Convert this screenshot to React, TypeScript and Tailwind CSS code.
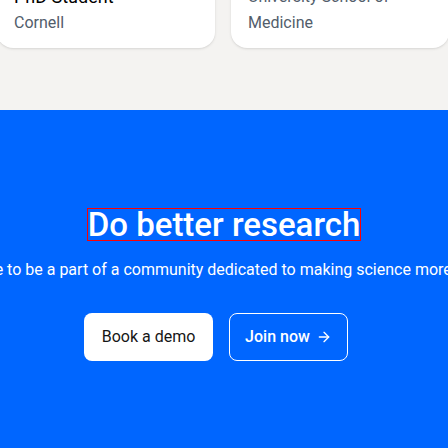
import React from 'react';
import { ArrowRight } from 'lucide-react';

interface Testimonial {
  role: string;
  place: string[];
}

const testimonials: Testimonial[] = [
  { role: 'PhD Student', place: ['Cornell'] },
  { role: 'Postdoctoral Fellow', place: ['University School of', 'Medicine'] },
];

const font = { fontFamily: 'Roboto, "Noto Sans", sans-serif' };

const TestimonialCard: React.FC<{ item: Testimonial }> = ({ item }) => (
  <div className="w-[218px] shrink-0 rounded-2xl bg-white px-[17px] pt-4 pb-3 shadow-sm">
    <p className="text-lg leading-[26px] text-black">{item.role}</p>
    {item.place.map((line) => (
      <p key={line} className="text-base leading-[26px] text-[#525d6b]">
        {line}
      </p>
    ))}
  </div>
);

const App: React.FC = () => {
  return (
    <div className="h-[448px] overflow-hidden bg-[#0066ff]" style={font}>
      {/* testimonials strip, scrolled so only the bottom of the cards shows */}
      <div className="flex h-[110px] items-start overflow-hidden bg-[#f4f3f1]">
        <div className="-ml-[3px] flex h-[48px] items-end gap-4">
          {testimonials.map((t) => (
            <TestimonialCard key={t.role} item={t} />
          ))}
        </div>
      </div>

      {/* call to action */}
      <div className="flex flex-col items-center pt-[98px] text-white">
        <h2 className="border border-[#ff0000] text-[33px] leading-[31px] font-medium">
          Do better research
        </h2>
        <div className="mt-4 flex w-full justify-center overflow-hidden">
          <p className="shrink-0 whitespace-nowrap text-base leading-[26px]">
            Researchers love to be a part of a community dedicated to making science more open and fairer.
          </p>
        </div>
        <div className="mt-[30px] flex gap-4 pr-4">
          <button className="h-12 w-[129px] rounded-lg bg-white text-base text-[#161616]">
            Book a demo
          </button>
          <button className="flex h-12 w-[119px] items-center justify-center gap-1.5 rounded-lg border border-white text-base font-medium text-white">
            Join now
            <ArrowRight size={16} strokeWidth={2} />
          </button>
        </div>
      </div>
    </div>
  );
};

export default App;
